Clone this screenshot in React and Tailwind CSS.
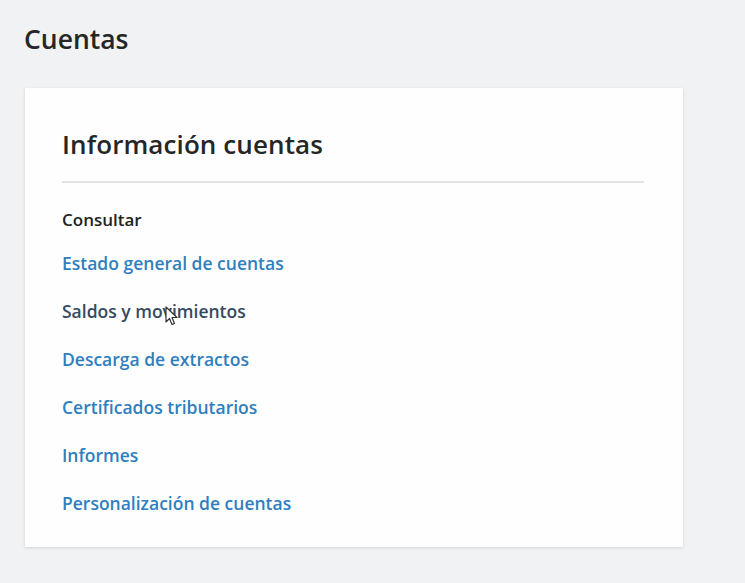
import React from "react";

const links = [
  { t: "Estado general de cuentas", c: "text-[#2f7fbf]" },
  { t: "Saldos y movimientos", c: "text-[#364a62]", cursor: true },
  { t: "Descarga de extractos", c: "text-[#2f7fbf]" },
  { t: "Certificados tributarios", c: "text-[#2f7fbf]" },
  { t: "Informes", c: "text-[#2f7fbf]" },
  { t: "Personalización de cuentas", c: "text-[#2f7fbf]" },
];

export default function App() {
  return (
    <div className="w-[745px] h-[583px] bg-[#f1f2f3] overflow-hidden font-['Open_Sans',sans-serif] pl-[24px] pt-[21px]">
      <h1 className="text-[26.5px] leading-[36px] text-[#262626] font-semibold tracking-[0px]">Cuentas</h1>
      <div className="mt-[31px] ml-[1px] w-[658px] h-[459px] bg-[#fefefe] shadow-[0_1px_3px_rgba(0,0,0,0.12)] px-[37px] pt-[38px]">
        <h2 className="text-[26px] leading-[36px] text-[#262626] font-semibold tracking-[0.1px]">Información cuentas</h2>
        <div className="mt-[19px] h-[2px] w-[582px] bg-[#e2e3e4]" />
        <div className="mt-[25px] text-[17px] leading-[24px] font-semibold text-[#222] tracking-[0px]">Consultar</div>
        <div className="mt-[19px] flex flex-col gap-[24px]">
          {links.map((l) => (
            <div key={l.t} className={`relative text-[17.5px] leading-[24px] font-semibold tracking-[0px] ${l.c}`}>
              {l.t}
              {l.cursor && (
                <svg className="absolute left-[103px] top-[7px]" width="14" height="20" viewBox="0 0 14 20">
                  <path d="M1 1 L1 16 L4.5 12.5 L7 18.5 L9.5 17.5 L7 11.5 L12 11.5 Z" fill="#fff" stroke="#333" strokeWidth="1.2" strokeLinejoin="round" />
                </svg>
              )}
            </div>
          ))}
        </div>
      </div>
    </div>
  );
}
